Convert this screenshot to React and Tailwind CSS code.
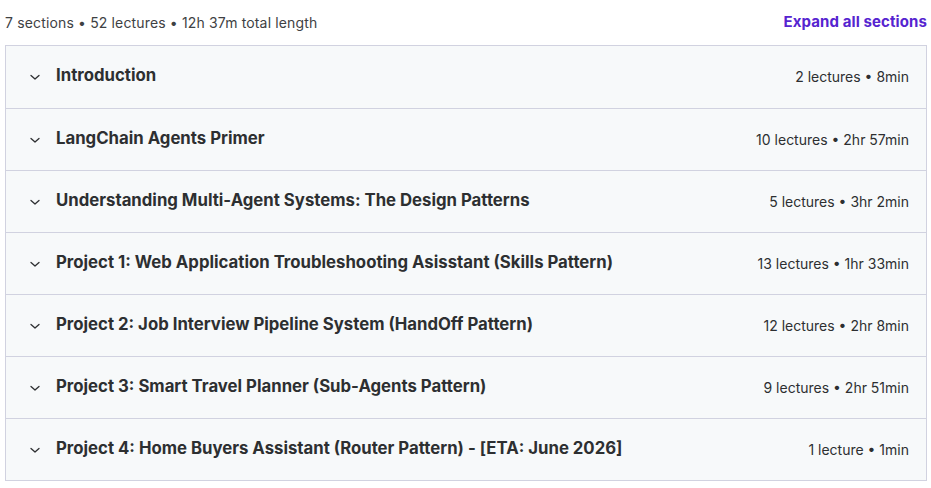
const SECTIONS = [
  ["Introduction", "2 lectures • 8min"],
  ["LangChain Agents Primer", "10 lectures • 2hr 57min"],
  ["Understanding Multi-Agent Systems: The Design Patterns", "5 lectures • 3hr 2min"],
  ["Project 1: Web Application Troubleshooting Asisstant (Skills Pattern)", "13 lectures • 1hr 33min"],
  ["Project 2: Job Interview Pipeline System (HandOff Pattern)", "12 lectures • 2hr 8min"],
  ["Project 3: Smart Travel Planner (Sub-Agents Pattern)", "9 lectures • 2hr 51min"],
  ["Project 4: Home Buyers Assistant (Router Pattern) - [ETA: June 2026]", "1 lecture • 1min"],
];

function Chevron() {
  return (
    <svg width="16" height="16" viewBox="0 0 16 16" fill="none" className="shrink-0">
      <path d="M4 6.5 L8 10 L12 6.5" stroke="#2d2f31" strokeWidth="1.3" strokeLinecap="round" strokeLinejoin="round" />
    </svg>
  );
}

export default function App() {
  return (
    <div className="w-[931px] h-[488px] bg-white font-['Inter',sans-serif] text-[#2d2f31]">
      <div className="flex items-center justify-between h-[45px] pl-[5px] pr-[4px]">
        <span className="text-[14px] tracking-[0.15px] text-[#3e4143]">7 sections • 52 lectures • 12h 37m total length</span>
        <button className="text-[15px] tracking-[0.1px] font-bold text-[#5624d0]">Expand all sections</button>
      </div>
      <div className="ml-[5px] w-[922px] border border-[#d1d2e0]">
        {SECTIONS.map(([title, meta], i) => (
          <div
            key={title}
            className={
              "flex items-center h-[62px] bg-[#f7f9fa] pl-[21px] pr-[17px] " +
              (i > 0 ? "border-t border-[#d1d2e0]" : "")
            }
          >
            <Chevron />
            <span className="ml-[13px] flex-1 text-[16.75px] font-bold -mt-[2px]">{title}</span>
            <span className="text-[14px] -mt-[1px]">{meta}</span>
          </div>
        ))}
      </div>
    </div>
  );
}
